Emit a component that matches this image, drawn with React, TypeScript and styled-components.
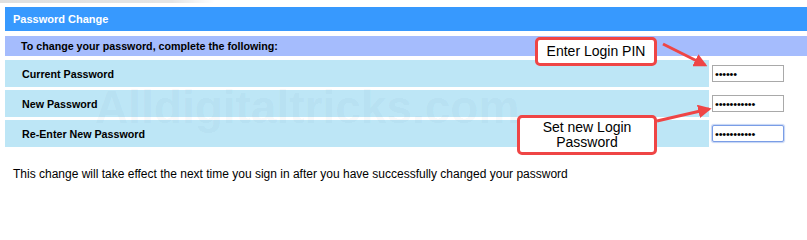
import styled, { createGlobalStyle } from "styled-components";

const GlobalStyle = createGlobalStyle`
  html, body {
    margin: 0;
    padding: 0;
    background: #ffffff;
    font-family: "Liberation Sans", Arial, sans-serif;
  }
`;

const fields = [
  { label: "Current Password", value: "123456", focused: false },
  { label: "New Password", value: "12345678901", focused: false },
  { label: "Re-Enter New Password", value: "12345678901", focused: true },
];

export default function App() {
  return (
    <Page>
      <GlobalStyle />
      <TopShadow />
      <Panel>
        <Header>Password Change</Header>
        <Intro>To change your password, complete the following:</Intro>
        <Rows>
          {fields.map(({ label, value, focused }) => (
            <Row key={label}>
              <LabelCell>{label}</LabelCell>
              <InputCell>
                <PasswordInput
                  type="password"
                  defaultValue={value}
                  readOnly
                  $focused={focused}
                />
              </InputCell>
            </Row>
          ))}
        </Rows>
      </Panel>
      <Note>
        This change will take effect the next time you sign in after you have
        successfully changed your password
      </Note>

      <Watermark>Alldigitaltricks.com</Watermark>

      <Callout $left={535} $top={37} $width={122} $height={29}>
        Enter Login PIN
      </Callout>
      <Callout $left={517} $top={115} $width={140} $height={40}>
        Set new Login
        <br />
        Password
      </Callout>

      <Arrows width="807" height="213" viewBox="0 0 807 213">
        <defs>
          <marker
            id="head"
            viewBox="0 0 10 10"
            refX="8"
            refY="5"
            markerWidth="4.5"
            markerHeight="4.5"
            orient="auto"
          >
            <path d="M0 0 L10 5 L0 10 z" fill="#ef4545" />
          </marker>
        </defs>
        <line
          x1="663"
          y1="44"
          x2="705"
          y2="65"
          stroke="#ef4545"
          strokeWidth="3"
          markerEnd="url(#head)"
        />
        <line
          x1="657"
          y1="121"
          x2="709"
          y2="109"
          stroke="#ef4545"
          strokeWidth="3"
          markerEnd="url(#head)"
        />
      </Arrows>
    </Page>
  );
}

const Page = styled.div`
  position: relative;
  width: 807px;
  height: 213px;
  overflow: hidden;
`;

const TopShadow = styled.div`
  width: 215px;
  height: 3px;
  background: linear-gradient(
    to right,
    rgba(0, 0, 0, 0.12),
    rgba(0, 0, 0, 0.1) 80%,
    rgba(0, 0, 0, 0)
  );
`;

const Panel = styled.div`
  margin: 4px 0 0 5px;
  display: flex;
  flex-direction: column;
`;

const Header = styled.div`
  height: 24px;
  background: #3799fe;
  color: #ffffff;
  font-size: 11px;
  font-weight: bold;
  display: flex;
  align-items: center;
  padding-left: 8px;
`;

const Intro = styled.div`
  margin-top: 5px;
  height: 20px;
  background: #a5bcfd;
  color: #000000;
  font-size: 10.7px;
  font-weight: bold;
  display: flex;
  align-items: center;
  padding-left: 16px;
`;

const Rows = styled.div`
  margin-top: 4px;
  display: flex;
  flex-direction: column;
  gap: 3px;
`;

const Row = styled.div`
  display: grid;
  grid-template-columns: 704px 1fr;
  height: 27px;
`;

const LabelCell = styled.div`
  background: #bde6f6;
  color: #000000;
  font-size: 10.7px;
  font-weight: bold;
  display: flex;
  align-items: center;
  padding-left: 17px;
`;

const InputCell = styled.div`
  display: flex;
  align-items: center;
  padding-left: 3px;
`;

const PasswordInput = styled.input<{ $focused: boolean }>`
  box-sizing: border-box;
  width: 72px;
  height: 17px;
  margin: 0;
  padding: 0 2px;
  font-family: "Liberation Sans", Arial, sans-serif;
  font-size: 11px;
  letter-spacing: -0.2px;
  color: #000000;
  background: #ffffff;
  border: 1px solid ${(p) => (p.$focused ? "#7a9de6" : "#a9a9a9")};
  border-radius: ${(p) => (p.$focused ? "2px" : "0")};
  box-shadow: ${(p) =>
    p.$focused ? "0 0 1px 1px rgba(122, 157, 230, 0.45)" : "none"};
  outline: none;
`;

const Note = styled.p`
  margin: 20px 0 0 13px;
  font-size: 12px;
  color: #000000;
`;

const Watermark = styled.div`
  position: absolute;
  left: 95px;
  top: 80px;
  font-size: 46px;
  font-weight: bold;
  color: rgba(40, 90, 120, 0.05);
  pointer-events: none;
  white-space: nowrap;
`;

const Callout = styled.div<{
  $left: number;
  $top: number;
  $width: number;
  $height: number;
}>`
  position: absolute;
  left: ${(p) => p.$left}px;
  top: ${(p) => p.$top}px;
  width: ${(p) => p.$width}px;
  height: ${(p) => p.$height}px;
  box-sizing: border-box;
  border: 3px solid #ef4545;
  border-radius: 5px;
  background: #ffffff;
  color: #000000;
  font-size: 14px;
  line-height: 15px;
  text-align: center;
  display: flex;
  align-items: center;
  justify-content: center;
`;

const Arrows = styled.svg`
  position: absolute;
  left: 0;
  top: 0;
  pointer-events: none;
`;
